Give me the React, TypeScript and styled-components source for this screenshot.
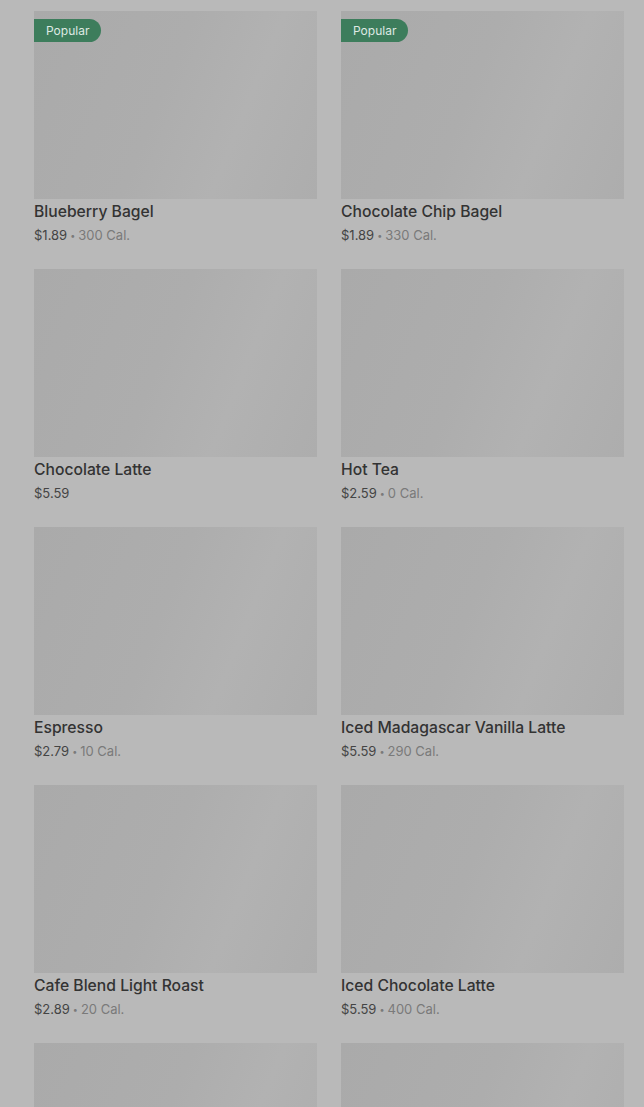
import React from "react";
import styled, { createGlobalStyle } from "styled-components";

const Global = createGlobalStyle`
  html, body {
    margin: 0;
    padding: 0;
    background: #b9b9b9;
    font-family: Inter, "Noto Sans", sans-serif;
  }
`;

const Grid = styled.div`
  display: grid;
  grid-template-columns: 283px 283px;
  grid-auto-rows: 234px;
  column-gap: 24px;
  row-gap: 24px;
  padding: 11px 0 0 34px;
  height: 1107px;
  overflow: hidden;
  box-sizing: border-box;
`;

const Card = styled.div`
  display: flex;
  flex-direction: column;
`;

const Media = styled.div`
  position: relative;
  flex: 0 0 188px;
  background: linear-gradient(112deg, #aaaaaa 0%, #adadad 45%, #b2b2b2 70%, #adadad 100%);
`;

const Badge = styled.span`
  position: absolute;
  top: 8px;
  left: 0;
  height: 23px;
  padding: 0 12px;
  display: flex;
  align-items: center;
  background: #3d7d5c;
  color: #dfe9e3;
  font-size: 12px;
  border-radius: 0 12px 12px 0;
`;

const Title = styled.div`
  margin-top: 2px;
  height: 22px;
  font-size: 15.7px;
  line-height: 22px;
  font-weight: 500;
  color: #333333;
  white-space: nowrap;
`;

const Meta = styled.div`
  display: flex;
  align-items: center;
  height: 20px;
  padding-top: 2px;
  font-size: 13px;
  line-height: 20px;
  color: #444444;
`;

const Dot = styled.span`
  color: #7a7a7a;
  font-size: 9px;
  line-height: 1;
  margin: 0 3px;
`;

const Cal = styled.span`
  color: #7a7a7a;
`;

type Item = { name: string; price: string; cal?: string; popular?: boolean; empty?: boolean };

const items: Item[] = [
  { name: "Blueberry Bagel", price: "$1.89", cal: "300 Cal.", popular: true },
  { name: "Chocolate Chip Bagel", price: "$1.89", cal: "330 Cal.", popular: true },
  { name: "Chocolate Latte", price: "$5.59" },
  { name: "Hot Tea", price: "$2.59", cal: "0 Cal." },
  { name: "Espresso", price: "$2.79", cal: "10 Cal." },
  { name: "Iced Madagascar Vanilla Latte", price: "$5.59", cal: "290 Cal." },
  { name: "Cafe Blend Light Roast", price: "$2.89", cal: "20 Cal." },
  { name: "Iced Chocolate Latte", price: "$5.59", cal: "400 Cal." },
  { name: "", price: "", empty: true },
  { name: "", price: "", empty: true },
];

export default function App() {
  return (
    <>
      <Global />
      <Grid>
        {items.map((it, i) => (
          <Card key={i}>
            <Media>{it.popular && <Badge>Popular</Badge>}</Media>
            {!it.empty && (
              <>
                <Title>{it.name}</Title>
                <Meta>
                  <span>{it.price}</span>
                  {it.cal && (
                    <>
                      <Dot>•</Dot>
                      <Cal>{it.cal}</Cal>
                    </>
                  )}
                </Meta>
              </>
            )}
          </Card>
        ))}
      </Grid>
    </>
  );
}
